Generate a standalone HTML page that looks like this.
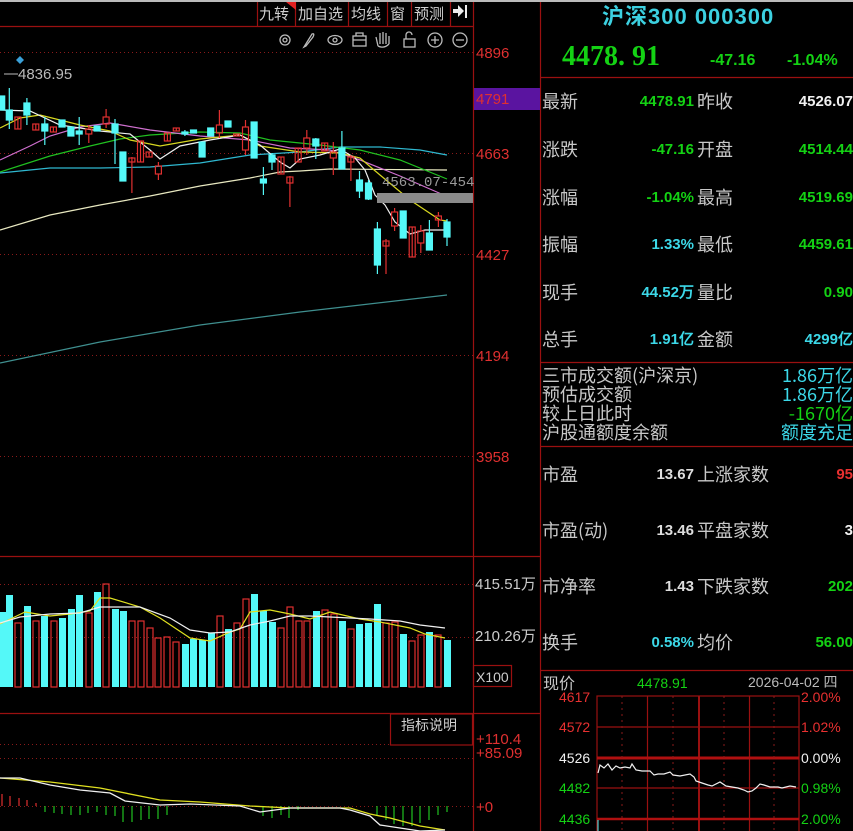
<!DOCTYPE html>
<html><head><meta charset="utf-8"><style>
*{margin:0;padding:0;box-sizing:border-box}
body{width:853px;height:831px;background:#000;overflow:hidden;position:relative;font-family:"Liberation Sans","Noto Sans CJK SC",sans-serif}
.t{position:absolute;white-space:nowrap;line-height:1}
.lb{font-family:"Noto Sans CJK SC",sans-serif;font-size:18px;color:#c8c8c8}
.v{font-family:"Liberation Sans",sans-serif;font-weight:bold;font-size:15px;text-align:right}
.ax{font-family:"Liberation Sans",sans-serif;font-size:15px;color:#e03030}
.tb{font-family:"Noto Sans CJK SC",sans-serif;font-size:15px;color:#d0d0d0}
.g{color:#14d214}.c{color:#3cd8e8}.w{color:#f0f0f0}.r{color:#e83030}
</style></head><body>
<svg width="853" height="831" style="position:absolute;left:0;top:0">
<rect x="0" y="0" width="853" height="2" fill="#bbb"/>
<g stroke="#9a1010" stroke-width="1.2" fill="none">
<line x1="0" y1="26.5" x2="473" y2="26.5"/>
<line x1="473.5" y1="2" x2="473.5" y2="831"/>
<line x1="540.5" y1="2" x2="540.5" y2="831"/>
<line x1="0" y1="556.5" x2="540" y2="556.5"/>
<line x1="0" y1="713.5" x2="540" y2="713.5"/>
<line x1="540" y1="77.5" x2="853" y2="77.5"/>
<line x1="540" y1="362.5" x2="853" y2="362.5"/>
<line x1="540" y1="446.5" x2="853" y2="446.5"/>
<line x1="540" y1="670.5" x2="853" y2="670.5"/>
<line x1="257.5" y1="2" x2="257.5" y2="26"/><line x1="295.5" y1="2" x2="295.5" y2="26"/><line x1="348.5" y1="2" x2="348.5" y2="26"/><line x1="387.5" y1="2" x2="387.5" y2="26"/><line x1="411.5" y1="2" x2="411.5" y2="26"/><line x1="450.5" y1="2" x2="450.5" y2="26"/>
<rect x="390.5" y="714" width="82" height="31"/>
<rect x="473.5" y="665.5" width="38" height="21"/>
</g>
<polygon points="286,2 296,2 296,10" fill="#e02020"/>
<g stroke="#8a1a1a" stroke-dasharray="1,3" stroke-width="1">
<line x1="0" y1="52.5" x2="473" y2="52.5"/><line x1="0" y1="153.5" x2="473" y2="153.5"/><line x1="0" y1="254.5" x2="473" y2="254.5"/><line x1="0" y1="355.5" x2="473" y2="355.5"/><line x1="0" y1="456.5" x2="473" y2="456.5"/>
<line x1="0" y1="584.5" x2="473" y2="584.5"/><line x1="0" y1="637.5" x2="473" y2="637.5"/>
<line x1="0" y1="744.5" x2="390" y2="744.5"/><line x1="0" y1="758.5" x2="473" y2="758.5"/><line x1="0" y1="806.5" x2="473" y2="806.5"/>
</g>
<rect x="474" y="88" width="66" height="22" fill="#5a14a0"/>
<g stroke="#bbb" stroke-width="1.3" fill="none">
<circle cx="285" cy="40" r="5"/><circle cx="285" cy="40" r="2"/>
<path d="M304 47 L312 34 Q315 33 313 37 L306 46 Z"/>
<ellipse cx="335" cy="40" rx="7" ry="4.5"/><circle cx="335" cy="40" r="2"/>
<rect x="353" y="36" width="13" height="10"/><path d="M356 36v-3h7v3M353 40h13"/>
<path d="M378 46 L376 37 M380 44 V33 M383 44 V32 M386 44 V33 M389 44 V36 M378 46 Q384 49 389 44"/>
<rect x="404" y="39" width="11" height="8"/><path d="M406 39v-4a3 3 0 0 1 6 0"/>
<circle cx="435" cy="40" r="7"/><path d="M431 40h8M435 36v8"/>
<circle cx="460" cy="40" r="7"/><path d="M456 40h8"/>
</g>
<path d="M453 9 h5 v-4 l6 6 -6 6 v-4 h-5z M465 5 h2 v13 h-2z" fill="#eee"/>
<polygon points="20,56 24,60 20,64 16,60" fill="#3aa0d8"/>
<line x1="4" y1="74" x2="18" y2="74" stroke="#bbb"/>
<g fill="none" stroke-width="1.2">
<polyline stroke="#3f8f8f" points="0,363 100,342 200,325 300,312 447,295"/>
<polyline stroke="#e8e8c0" points="0,230 50,215 100,205 150,196 200,186 250,178 280,172 300,171 330,169 447,170"/>
<polyline stroke="#2fb8d0" points="0,173 50,168 100,168 150,167 200,163 250,155 300,152 340,147 380,147 420,150 447,155"/>
<polyline stroke="#20c020" points="0,172 50,156 90,146 120,139 150,135 200,132 240,133 270,140 320,145 360,150 400,160 447,179"/>
<polyline stroke="#d070d0" points="0,160 30,146 50,136 80,127 110,123 150,130 200,136 250,140 290,148 330,150 360,160 400,176 446,196"/>
<polyline stroke="#d8d820" points="0,128 20,118 40,115 80,125 110,131 130,140 160,146 200,139 240,135 260,146 300,152 340,153 360,158 380,175 410,200 440,220 447,221"/>
<polyline stroke="#f0f0f0" points="0,110 30,111 60,125 100,131 130,134 150,150 160,159 180,146 210,140 240,135 260,145 280,162 290,168 300,159 320,155 340,149 355,158 365,170 375,195 385,205 395,222 410,234 425,230 447,230"/>
</g>
<rect x="377" y="193" width="96" height="10" fill="#8a8a8a"/>
<g stroke="#e03030" fill="none" stroke-width="1.2">
<path d="M17.9 117v12M35.8 124v6M53.4 127v5M88.8 129v-4M88.8 134v9M106.1 117v-8M106.1 124v4M131.9 157v36M140.5 141v21M149.1 152v5M158.4 166v-4M158.4 174v6M167.4 133v8M176.3 128v3M219.4 110v15M219.4 133v5M236.6 134v2M245.5 127v-7M245.5 150v5M281 157v17M289.9 176v31M298.2 148v14M306.8 138v-8M306.8 148v7M324.7 143v8M333.3 152v-10M333.3 158v17M350.9 155v26M386 239v35M394.6 212v-4M394.6 226v5M412.2 227v30M420.8 231v-6M420.8 243v10M438.4 216v-4M438.4 220v7"/>
<rect x="14.9" y="117" width="6" height="12"/><rect x="32.8" y="124" width="6" height="6"/><rect x="50.4" y="127" width="6" height="5"/><rect x="85.8" y="129" width="6" height="5"/><rect x="103.1" y="117" width="6" height="7"/><rect x="128.9" y="158" width="6" height="4"/><rect x="137.5" y="141" width="6" height="21"/><rect x="146.1" y="152" width="6" height="5"/><rect x="155.4" y="166" width="6" height="8"/><rect x="164.4" y="133" width="6" height="8"/><rect x="173.3" y="128" width="6" height="3"/><rect x="216.4" y="125" width="6" height="8"/><rect x="233.6" y="134" width="6" height="2"/><rect x="242.5" y="127" width="6" height="23"/><rect x="278" y="157" width="6" height="17"/><rect x="286.9" y="177" width="6" height="6"/><rect x="295.2" y="148" width="6" height="14"/><rect x="303.8" y="138" width="6" height="10"/><rect x="321.7" y="143" width="6" height="8"/><rect x="330.3" y="152" width="6" height="6"/><rect x="347.9" y="157" width="6" height="5"/><rect x="383" y="241" width="6" height="5"/><rect x="391.6" y="212" width="6" height="14"/><rect x="409.2" y="227" width="6" height="30"/><rect x="417.8" y="231" width="6" height="12"/><rect x="435.4" y="216" width="6" height="4"/>
</g>
<g stroke="#54f8f8" fill="#54f8f8" stroke-width="1.2">
<path d="M9.3 88v41M26.9 98v27M44.8 117v28M79.2 117v28M115 119v45M184.9 130v6M263.4 167v28M272 153v17M315.8 138v21M341.9 131v38M359.5 171v27M368.5 180v20M377.4 222v52M429.4 220v30M447 219v27"/>
<rect x="-1.3" y="96" width="6" height="14"/><rect x="6.3" y="110" width="6" height="10"/><rect x="23.9" y="103" width="6" height="12"/><rect x="41.8" y="124" width="6" height="7"/><rect x="59" y="120" width="6" height="7"/><rect x="67.9" y="127" width="6" height="9"/><rect x="76.2" y="131" width="6" height="3"/><rect x="94.1" y="126" width="6" height="5"/><rect x="112" y="124" width="6" height="9"/><rect x="119.9" y="152" width="6" height="29"/><rect x="181.9" y="132" width="6" height="2"/><rect x="190.5" y="130" width="6" height="3"/><rect x="199.1" y="142" width="6" height="15"/><rect x="207.7" y="128" width="6" height="8"/><rect x="225" y="121" width="6" height="6"/><rect x="251.1" y="122" width="6" height="36"/><rect x="260.4" y="179" width="6" height="4"/><rect x="269" y="155" width="6" height="7"/><rect x="312.8" y="139" width="6" height="7"/><rect x="338.9" y="148" width="6" height="21"/><rect x="356.5" y="180" width="6" height="11"/><rect x="365.5" y="183" width="6" height="16"/><rect x="374.4" y="229" width="6" height="36"/><rect x="400.2" y="211" width="6" height="27"/><rect x="426.4" y="233" width="6" height="17"/><rect x="444" y="222" width="6" height="15"/></g>
<g fill="#54f8f8">
<rect x="-1" y="612" width="7" height="75"/><rect x="6" y="595" width="7" height="92"/><rect x="24" y="606" width="7" height="81"/><rect x="41" y="616" width="7" height="71"/><rect x="59" y="618" width="7" height="69"/><rect x="68" y="609" width="7" height="78"/><rect x="76" y="595" width="7" height="92"/><rect x="94" y="592" width="7" height="95"/><rect x="112" y="609" width="7" height="78"/><rect x="120" y="611" width="7" height="76"/><rect x="182" y="644" width="7" height="43"/><rect x="190" y="639" width="7" height="48"/><rect x="199" y="640" width="7" height="47"/><rect x="208" y="633" width="7" height="54"/><rect x="225" y="629" width="7" height="58"/><rect x="251" y="594" width="7" height="93"/><rect x="260" y="611" width="7" height="76"/><rect x="269" y="622" width="7" height="65"/><rect x="313" y="611" width="7" height="76"/><rect x="339" y="621" width="7" height="66"/><rect x="356" y="624" width="7" height="63"/><rect x="365" y="623" width="7" height="64"/><rect x="374" y="604" width="7" height="83"/><rect x="400" y="634" width="7" height="53"/><rect x="426" y="632" width="7" height="55"/><rect x="444" y="640" width="7" height="47"/>
</g>
<g fill="none" stroke="#e03030" stroke-width="1.2">
<rect x="15" y="623" width="6" height="64"/><rect x="33" y="621" width="6" height="66"/><rect x="51" y="621" width="6" height="66"/><rect x="86" y="613" width="6" height="74"/><rect x="103" y="584" width="6" height="103"/><rect x="129" y="621" width="6" height="66"/><rect x="138" y="621" width="6" height="66"/><rect x="147" y="628" width="6" height="59"/><rect x="155" y="638" width="6" height="49"/><rect x="164" y="637" width="6" height="50"/><rect x="173" y="642" width="6" height="45"/><rect x="217" y="616" width="6" height="71"/><rect x="234" y="623" width="6" height="64"/><rect x="243" y="599" width="6" height="88"/><rect x="278" y="628" width="6" height="59"/><rect x="287" y="607" width="6" height="80"/><rect x="296" y="621" width="6" height="66"/><rect x="304" y="621" width="6" height="66"/><rect x="322" y="610" width="6" height="77"/><rect x="331" y="614" width="6" height="73"/><rect x="348" y="629" width="6" height="58"/><rect x="383" y="623" width="6" height="64"/><rect x="392" y="622" width="6" height="65"/><rect x="409" y="641" width="6" height="46"/><rect x="418" y="635" width="6" height="52"/><rect x="435" y="635" width="6" height="52"/>
</g>
<g fill="none" stroke-width="1.2">
<polyline stroke="#e0e020" points="0,624 25,612 50,616 70,614 90,611 100,598 110,598 140,607 160,618 190,638 210,641 230,632 240,629 250,612 270,610 290,614 310,619 330,612 360,619 380,622 410,628 425,634 445,638"/>
<polyline stroke="#f0f0f0" points="0,623 20,617 50,614 80,613 100,607 140,607 170,618 190,630 210,633 230,632 250,625 270,621 290,616 310,616 330,617 370,619 400,621 420,625 445,628"/>
</g>
<g stroke="#e03030" stroke-width="1.2"><path d="M2 806v-12M10 806v-10M19 806v-8M27 806v-6M36 806v-3"/></g>
<g stroke="#20c020" stroke-width="1.2"><path d="M45 806v6M54 806v7M62 806v8M71 806v9M80 806v9M88 806v7M97 806v6M106 806v9M115 806v10M123 806v16M132 806v16M141 806v14M149 806v13M158 806v13M167 806v9M263 806v10M272 806v12M281 806v9M289 806v12M298 806v4M377 806v10M386 806v14M394 806v18M403 806v20M412 806v20M420 806v17M429 806v14M438 806v9M447 806v6"/></g>
<g fill="none" stroke-width="1.3">
<polyline stroke="#e0e020" points="0,778 50,782 100,788 160,800 200,802 250,806 290,808 350,808 370,814 390,818 420,826 445,830"/>
<polyline stroke="#f0f0f0" points="0,778 20,778 50,785 80,790 110,793 125,801 160,805 190,804 240,806 260,812 290,808 340,808 350,810 370,816 380,825 400,828 420,831 445,830"/>
</g>
<g stroke="#9a1010" fill="none" stroke-width="1.2">
<rect x="597" y="696" width="202" height="140"/>
<line x1="597" y1="727" x2="799" y2="727"/><line x1="597" y1="788" x2="799" y2="788"/>
<line x1="647.5" y1="696" x2="647.5" y2="831"/><line x1="699" y1="696" x2="699" y2="831" stroke-width="2"/><line x1="749.5" y1="696" x2="749.5" y2="831"/>
</g>
<line x1="597" y1="758" x2="799" y2="758" stroke="#b01010" stroke-width="3"/>
<line x1="597" y1="819" x2="799" y2="819" stroke="#b01010" stroke-width="2.5"/>
<g stroke="#8a1a1a" stroke-dasharray="2,4"><line x1="622" y1="696" x2="622" y2="831"/><line x1="673" y1="696" x2="673" y2="831"/><line x1="724" y1="696" x2="724" y2="831"/><line x1="774" y1="696" x2="774" y2="831"/></g>
<polyline fill="none" stroke="#f0f0f0" stroke-width="1.2" points="598,773 600,765 604,768 608,764 612,770 616,766 620,768 625,767 630,768 632,764 636,770 642,771 650,771 654,775 658,774 664,774 670,772 673,775 680,776 690,774 694,777 696,781 702,783 708,785 712,786 720,782 726,786 732,787 738,788 744,790 748,792 752,791 756,788 760,784 764,785 770,787 778,787 782,788 790,786 796,787"/>
<line x1="598" y1="820" x2="598" y2="831" stroke="#54f8f8"/>
</svg>
<div class="t tb" style="left:259px;top:6px">九转</div>
<div class="t tb" style="left:298px;top:6px">加自选</div>
<div class="t tb" style="left:351px;top:6px">均线</div>
<div class="t tb" style="left:390px;top:6px">窗</div>
<div class="t tb" style="left:414px;top:6px">预测</div>
<div class="t" style="left:18px;top:67px;font-size:15px;color:#bbb">4836.95</div>
<div class="t" style="left:382px;top:176px;font-size:14px;color:#9a9a9a;font-family:'Liberation Mono',monospace">4563.07-454</div>
<div class="t ax" style="left:476px;top:46px">4896</div>
<div class="t ax" style="left:476px;top:92px">4791</div>
<div class="t ax" style="left:476px;top:147px">4663</div>
<div class="t ax" style="left:476px;top:248px">4427</div>
<div class="t ax" style="left:476px;top:349px">4194</div>
<div class="t ax" style="left:476px;top:450px">3958</div>
<div class="t" style="left:475px;top:577px;font-size:15px;color:#ccc">415.51万</div>
<div class="t" style="left:475px;top:629px;font-size:15px;color:#ccc">210.26万</div>
<div class="t" style="left:476px;top:670px;font-size:14px;color:#ccc">X100</div>
<div class="t tb" style="left:401px;top:718px;font-size:14px">指标说明</div>
<div class="t ax" style="left:476px;top:732px">+110.4</div>
<div class="t ax" style="left:476px;top:746px">+85.09</div>
<div class="t ax" style="left:476px;top:800px">+0</div>
<div class="t" style="left:602px;top:6px;font-size:22px;font-weight:bold;color:#3cd0e0;font-family:'Liberation Sans','Noto Sans CJK SC',sans-serif;letter-spacing:1px">沪深300 000300</div>
<div class="t g" style="left:562px;top:43px;font-size:28px;font-weight:bold;font-family:'Liberation Serif',serif">4478. 91</div>
<div class="t g" style="left:710px;top:53px;font-size:16px;font-weight:bold">-47.16</div>
<div class="t g" style="left:787px;top:53px;font-size:16px;font-weight:bold">-1.04%</div>

<div class="t lb" style="left:542px;top:92px">最新</div><div class="t v g" style="right:159px;top:94px">4478.91</div><div class="t lb" style="left:697px;top:92px">昨收</div><div class="t v w" style="right:0;top:94px">4526.07</div>
<div class="t lb" style="left:542px;top:140px">涨跌</div><div class="t v g" style="right:159px;top:142px">-47.16</div><div class="t lb" style="left:697px;top:140px">开盘</div><div class="t v g" style="right:0;top:142px">4514.44</div>
<div class="t lb" style="left:542px;top:188px">涨幅</div><div class="t v g" style="right:159px;top:190px">-1.04%</div><div class="t lb" style="left:697px;top:188px">最高</div><div class="t v g" style="right:0;top:190px">4519.69</div>
<div class="t lb" style="left:542px;top:235px">振幅</div><div class="t v c" style="right:159px;top:237px">1.33%</div><div class="t lb" style="left:697px;top:235px">最低</div><div class="t v g" style="right:0;top:237px">4459.61</div>
<div class="t lb" style="left:542px;top:283px">现手</div><div class="t v c" style="right:159px;top:285px">44.52万</div><div class="t lb" style="left:697px;top:283px">量比</div><div class="t v g" style="right:0;top:285px">0.90</div>
<div class="t lb" style="left:542px;top:330px">总手</div><div class="t v c" style="right:159px;top:332px">1.91亿</div><div class="t lb" style="left:697px;top:330px">金额</div><div class="t v c" style="right:0;top:332px">4299亿</div>

<div class="t lb" style="left:542px;top:366px;line-height:19px">三市成交额(沪深京)<br>预估成交额<br>较上日此时<br>沪股通额度余额</div>
<div class="t lb" style="right:0;top:366px;line-height:19px;text-align:right"><span class="c">1.86万亿</span><br><span class="c">1.86万亿</span><br><span class="g">-1670亿</span><br><span class="c">额度充足</span></div>

<div class="t lb" style="left:542px;top:465px">市盈</div><div class="t v" style="color:#ddd;right:159px;top:467px">13.67</div><div class="t lb" style="left:697px;top:465px">上涨家数</div><div class="t v r" style="right:0;top:467px">95</div>
<div class="t lb" style="left:542px;top:521px">市盈(动)</div><div class="t v" style="color:#ddd;right:159px;top:523px">13.46</div><div class="t lb" style="left:697px;top:521px">平盘家数</div><div class="t v w" style="right:0;top:523px">3</div>
<div class="t lb" style="left:542px;top:577px">市净率</div><div class="t v" style="color:#ddd;right:159px;top:579px">1.43</div><div class="t lb" style="left:697px;top:577px">下跌家数</div><div class="t v g" style="right:0;top:579px">202</div>
<div class="t lb" style="left:542px;top:633px">换手</div><div class="t v c" style="right:159px;top:635px">0.58%</div><div class="t lb" style="left:697px;top:633px">均价</div><div class="t v g" style="right:0;top:635px">56.00</div>

<div class="t lb" style="left:543px;top:674px;font-size:16px">现价</div>
<div class="t g" style="left:637px;top:676px;font-size:14px">4478.91</div>
<div class="t" style="left:748px;top:675px;font-size:14px;color:#bbb">2026-04-02 四</div>
<div class="t r" style="left:559px;top:690px;font-size:14px">4617</div>
<div class="t r" style="left:559px;top:720px;font-size:14px">4572</div>
<div class="t w" style="left:559px;top:751px;font-size:14px">4526</div>
<div class="t g" style="left:559px;top:781px;font-size:14px">4482</div>
<div class="t g" style="left:559px;top:812px;font-size:14px">4436</div>
<div class="t r" style="left:801px;top:690px;font-size:14px">2.00%</div>
<div class="t r" style="left:801px;top:720px;font-size:14px">1.02%</div>
<div class="t w" style="left:801px;top:751px;font-size:14px">0.00%</div>
<div class="t g" style="left:801px;top:781px;font-size:14px">0.98%</div>
<div class="t g" style="left:801px;top:812px;font-size:14px">2.00%</div>
</body></html>
